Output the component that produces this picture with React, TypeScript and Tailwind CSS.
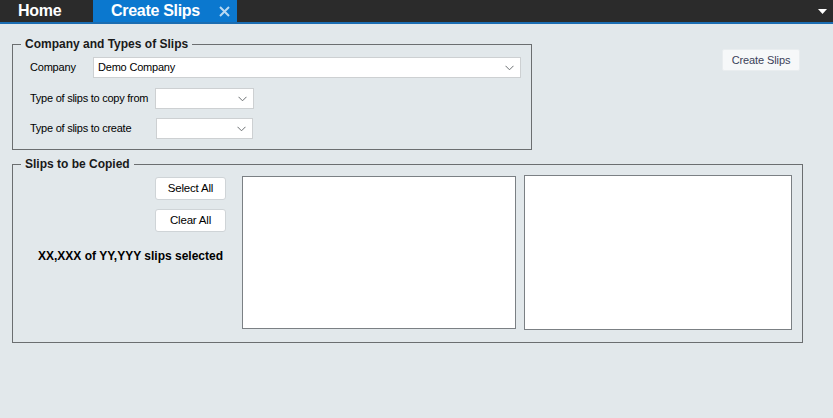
import React from "react";

const font = { fontFamily: '"Liberation Sans", Arial, sans-serif' };

const Combo: React.FC<{ className?: string; value?: string }> = ({ className = "", value }) => (
  <div
    className={`flex h-[21px] items-center justify-between border border-[#cdd0d2] bg-white pl-[4px] pr-[6px] text-[11px] tracking-[-0.2px] text-black ${className}`}
  >
    <span className="whitespace-nowrap">{value}</span>
    <svg width="9" height="6" viewBox="0 0 9 6" className="shrink-0">
      <path d="M0.5 0.8 L4.5 4.8 L8.5 0.8" fill="none" stroke="#6b6f72" strokeWidth="1" />
    </svg>
  </div>
);

const WinButton: React.FC<{ label: string; className?: string }> = ({ label, className = "" }) => (
  <button
    className={`block h-[23px] w-[71px] rounded-[3px] border border-[#cfd4d7] bg-white text-[11.5px] tracking-[-0.2px] text-black ${className}`}
  >
    {label}
  </button>
);

const App: React.FC = () => {
  return (
    <div className="flex h-screen w-full flex-col bg-[#e2e8eb]" style={font}>
      {/* Tab bar */}
      <div className="flex h-[22px] items-stretch bg-[#2b2b2b]">
        <div className="flex w-[93px] items-center pl-[18px] text-[16px] font-bold tracking-[-0.3px] text-white">
          Home
        </div>
        <div className="flex w-[144px] items-center bg-[#0b78cf] pl-[18px] text-[16px] font-bold tracking-[-0.3px] text-white">
          <span>Create Slips</span>
          <svg width="11" height="11" viewBox="0 0 11 11" className="ml-[19px]">
            <path d="M1 1 L10 10 M10 1 L1 10" stroke="#b9d9f2" strokeWidth="2" />
          </svg>
        </div>
        <div className="ml-auto flex items-center pr-[6px]">
          <svg width="9" height="5" viewBox="0 0 9 5">
            <path d="M0 0 H9 L4.5 5 Z" fill="#ffffff" />
          </svg>
        </div>
      </div>
      <div className="h-[2px] bg-[#1b6db2]" />

      {/* Content */}
      <div className="flex flex-col px-[12px] pt-[13px]">
        <div className="flex items-start">
          <fieldset className="w-[520px] border border-[#6b6e70]">
            <legend className="ml-[8px] px-[4px] text-[12px] font-bold leading-[14px] text-[#1a1a1a]">
              Company and Types of Slips
            </legend>
            <div className="pb-[10px] pl-[17px] pr-[10px]">
              <div className="mt-[6px] flex items-center">
                <span className="w-[63px] whitespace-nowrap text-[11px] tracking-[-0.2px] text-black">Company</span>
                <Combo className="w-[428px]" value="Demo Company" />
              </div>
              <div className="mt-[10px] flex items-center">
                <span className="w-[125px] whitespace-nowrap text-[11px] tracking-[-0.25px] text-black">
                  Type of slips to copy from
                </span>
                <Combo className="w-[99px]" />
              </div>
              <div className="mt-[9px] flex items-center">
                <span className="w-[126px] whitespace-nowrap text-[11px] tracking-[-0.25px] text-black">
                  Type of slips to create
                </span>
                <Combo className="w-[97px]" />
              </div>
            </div>
          </fieldset>
          <button className="ml-auto mr-[21px] mt-[12px] h-[22px] w-[78px] rounded-[2px] border border-[#e9edef] bg-[#f6f8f9] text-[11px] tracking-[-0.1px] text-[#3a3f58]">
            Create Slips
          </button>
        </div>

        <fieldset className="mt-[7px] w-[790px] border border-[#6b6e70]">
          <legend className="ml-[8px] px-[4px] text-[12px] font-bold leading-[14px] text-[#1a1a1a]">
            Slips to be Copied
          </legend>
          <div className="mt-[5px] flex pb-[12px] pl-[12px] pr-[10px]">
            <div className="flex w-[217px] flex-col items-end">
              <WinButton label="Select All" className="mr-[16px] mt-[1px]" />
              <WinButton label="Clear All" className="mr-[16px] mt-[9px]" />
              <div className="mr-[19px] mt-[17px] whitespace-nowrap text-[12px] font-bold leading-[14px] text-black">
                XX,XXX of YY,YYY slips selected
              </div>
            </div>
            <div className="h-[153px] w-[274px] border border-[#7b8084] bg-white" />
            <div className="ml-[8px] -mt-[1px] h-[155px] w-[268px] border border-[#7b8084] bg-white" />
          </div>
        </fieldset>
      </div>
    </div>
  );
};

export default App;
